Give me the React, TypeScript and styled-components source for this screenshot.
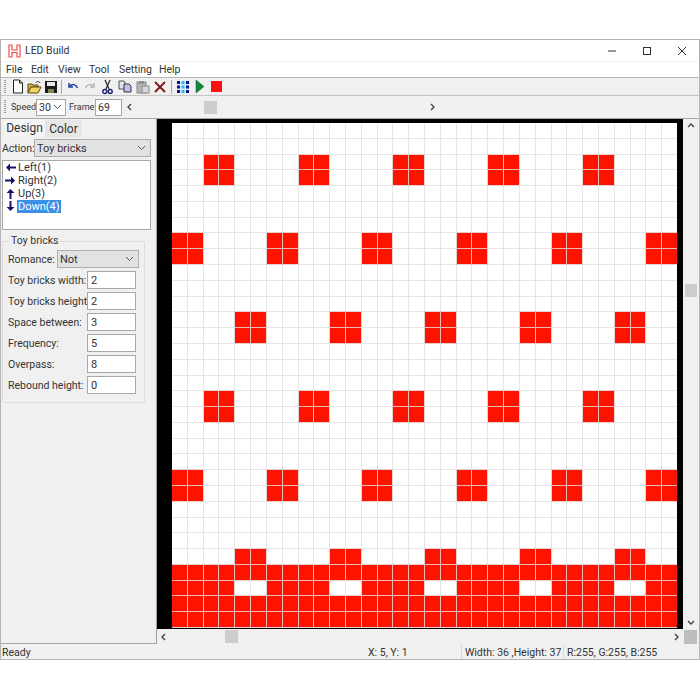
import React from "react";
import styled, { createGlobalStyle } from "styled-components";

const GlobalStyle = createGlobalStyle`
  html, body {
    margin: 0;
    padding: 0;
    background: #ffffff;
  }
  * {
    box-sizing: border-box;
  }
`;

const Window = styled.div`
  margin-top: 39px;
  width: 700px;
  height: 621px;
  display: flex;
  flex-direction: column;
  border: 1px solid #b4b4b4;
  background: #f0f0f0;
  color: #333333;
  font-family: Roboto, "Noto Sans", sans-serif;
  font-size: 10.5px;
  overflow: hidden;
`;

const TitleBar = styled.div`
  height: 21px;
  margin-bottom: 1px;
  display: flex;
  align-items: center;
  background: #ffffff;
  padding-left: 7px;
  flex: none;
`;

const AppTitle = styled.span`
  margin-left: 4px;
  flex: 1;
`;

const WindowButton = styled.div`
  width: 35px;
  display: flex;
  justify-content: center;
  align-items: center;
`;

const MenuBar = styled.div`
  height: 16px;
  display: flex;
  align-items: center;
  background: #ffffff;
  padding: 1px 0 0 5px;
  border-bottom: 1px solid #b8b8b8;
  flex: none;
`;

const MenuItem = styled.span<{ $w: number }>`
  width: ${(p) => p.$w}px;
  line-height: 14px;
  flex: none;
`;

const IconBar = styled.div`
  height: 18px;
  display: flex;
  align-items: center;
  padding-left: 3px;
  border-bottom: 1px solid #c4c4c4;
  flex: none;
`;

const Gripper = styled.div<{ $gap: number }>`
  width: 2px;
  height: 14px;
  margin-right: ${(p) => p.$gap}px;
  background-image: linear-gradient(#a0a0a0 50%, transparent 50%);
  background-size: 2px 2px;
  flex: none;
`;

const ToolIcon = styled.div<{ $w: number }>`
  width: ${(p) => p.$w}px;
  height: 16px;
  display: flex;
  align-items: center;
  justify-content: center;
  flex: none;
`;

const Separator = styled.div`
  width: 1px;
  height: 14px;
  margin: 0 2px;
  background: #a8a8a8;
  flex: none;
`;

const SpeedBar = styled.div`
  height: 23px;
  display: flex;
  align-items: center;
  padding-left: 3px;
  border-bottom: 1px solid #a8a8a8;
  flex: none;
`;

const SmallLabel = styled.span<{ $w: number }>`
  width: ${(p) => p.$w}px;
  font-size: 9px;
  white-space: nowrap;
  flex: none;
`;

const SpeedSelect = styled.div`
  width: 30px;
  height: 17px;
  margin-right: 3px;
  display: flex;
  align-items: center;
  justify-content: space-between;
  padding: 0 3px 0 2px;
  background: #ffffff;
  border: 1px solid #a6a6a6;
  flex: none;
`;

const FrameInput = styled.div`
  width: 27px;
  height: 17px;
  margin-right: 1px;
  padding-left: 2px;
  display: flex;
  align-items: center;
  background: #ffffff;
  border: 1px solid #a6a6a6;
  flex: none;
`;

const HTrack = styled.div<{ $w?: number }>`
  display: flex;
  align-items: center;
  height: 15px;
  flex: ${(p) => (p.$w ? "none" : "1")};
  width: ${(p) => (p.$w ? `${p.$w}px` : "auto")};
`;

const ArrowCell = styled.div`
  width: 13px;
  height: 13px;
  display: flex;
  align-items: center;
  justify-content: center;
  flex: none;
`;

const HThumb = styled.div<{ $left: number }>`
  width: 13px;
  height: 13px;
  margin-left: ${(p) => p.$left}px;
  margin-right: auto;
  background: #cdcdcd;
  flex: none;
`;

const Main = styled.div`
  flex: 1;
  min-height: 0;
  display: flex;
`;

const LeftPanel = styled.div`
  width: 156px;
  display: flex;
  flex-direction: column;
  border-right: 1px solid #a0a0a0;
  border-bottom: 1px solid #a8a8a8;
  padding: 0 4px 0 1px;
  flex: none;
`;

const Tabs = styled.div`
  height: 18px;
  display: flex;
  padding-left: 2px;
  flex: none;
`;

const Tab = styled.div<{ $active?: boolean }>`
  display: flex;
  align-items: center;
  justify-content: center;
  width: ${(p) => (p.$active ? 41 : 37)}px;
  height: ${(p) => (p.$active ? 18 : 17)}px;
  margin-top: ${(p) => (p.$active ? 0 : 1)}px;
  background: ${(p) => (p.$active ? "#f4f4f4" : "#e6e6e6")};
  font-size: 12px;
`;

const ActionRow = styled.div`
  display: flex;
  align-items: center;
  height: 18px;
  margin-top: 2px;
`;

const DropDown = styled.div<{ $w: number }>`
  width: ${(p) => p.$w}px;
  height: 18px;
  display: flex;
  align-items: center;
  justify-content: space-between;
  padding: 0 4px 0 2px;
  background: #e2e2e2;
  border: 1px solid #adadad;
  font-size: 11px;
  flex: none;
`;

const ActionLabel = styled.span`
  width: 32px;
  flex: none;
`;

const ActionList = styled.div`
  width: 149px;
  height: 70px;
  margin-top: 3px;
  padding-left: 1px;
  background: #ffffff;
  border: 1px solid #a8a8a8;
`;

const ListRow = styled.div`
  display: flex;
  align-items: center;
  height: 13px;
  font-size: 11px;
`;

const ListArrow = styled.div`
  width: 13px;
  display: flex;
  justify-content: center;
  flex: none;
`;

const ListText = styled.span<{ $selected?: boolean }>`
  padding: 0 1px;
  line-height: 13px;
  background: ${(p) => (p.$selected ? "#3a8fe6" : "transparent")};
  color: ${(p) => (p.$selected ? "#ffffff" : "#333333")};
`;

const Group = styled.fieldset`
  width: 143px;
  margin: 5px 0 0;
  padding: 0 4px 6px 5px;
  height: 168px;
  border: 1px solid #dcdcdc;
  border-radius: 2px;
`;

const GroupTitle = styled.legend`
  padding: 0 1px;
  margin-left: 2px;
  line-height: 12px;
`;

const FieldRow = styled.div`
  display: flex;
  align-items: center;
  height: 18px;
  margin-top: 3px;
`;

const FieldLabel = styled.span<{ $w: number }>`
  width: ${(p) => p.$w}px;
  white-space: nowrap;
  flex: none;
`;

const FieldInput = styled.div`
  width: 49px;
  height: 18px;
  padding-left: 3px;
  display: flex;
  align-items: center;
  background: #ffffff;
  border: 1px solid #a8a8a8;
  font-size: 11px;
  flex: none;
`;

const CanvasArea = styled.div`
  flex: 1;
  min-width: 0;
  display: flex;
  flex-direction: column;
`;

const CanvasRow = styled.div`
  flex: 1;
  min-height: 0;
  display: flex;
`;

const Viewport = styled.div`
  flex: 1;
  padding: 4px 6px 1px 15px;
  background: #000000;
`;

const LedGrid = styled.div`
  width: 505px;
  height: 505px;
  display: grid;
  grid-template-columns: repeat(32, 1fr);
  grid-template-rows: repeat(32, 1fr);
  gap: 1px;
  background: #e6e6e6;
  padding: 0 0 1px;
`;

const Led = styled.div<{ $on: boolean }>`
  background: ${(p) => (p.$on ? "#fe1300" : "#ffffff")};
  box-shadow: ${(p) => (p.$on ? "0 0 0 1px rgba(240, 60, 40, 0.12)" : "none")};
`;

const VScroll = styled.div`
  width: 16px;
  display: flex;
  flex-direction: column;
  align-items: center;
  flex: none;
`;

const VThumb = styled.div`
  width: 12px;
  height: 13px;
  margin-top: 152px;
  margin-bottom: auto;
  background: #cdcdcd;
`;

const BottomScroll = styled.div`
  height: 15px;
  display: flex;
  align-items: center;
  flex: none;
`;

const Corner = styled.div`
  width: 13px;
  height: 14px;
  margin: 0 2px 0 1px;
  background: #bdbdbd;
  flex: none;
`;

const StatusBar = styled.div`
  height: 15px;
  display: flex;
  align-items: center;
  flex: none;
`;

const StatusCell = styled.div<{ $w: number; $divider?: boolean; $pad?: number }>`
  width: ${(p) => p.$w}px;
  padding-left: ${(p) => p.$pad ?? 4}px;
  height: 15px;
  line-height: 18px;
  white-space: nowrap;
  flex: none;
  border-left: ${(p) => (p.$divider ? "1px solid #dadada" : "none")};
`;

const Chevron = ({ dir }: { dir: "up" | "down" | "left" | "right" }) => {
  const points = {
    up: "1,5 4,2 7,5",
    down: "1,2 4,5 7,2",
    left: "5,1 2,4 5,7",
    right: "2,1 5,4 2,7",
  }[dir];
  return (
    <svg width="8" height="8" viewBox="0 0 8 8">
      <polyline points={points} fill="none" stroke="#444" strokeWidth="1.4" />
    </svg>
  );
};

const SelectCaret = () => (
  <svg width="9" height="6" viewBox="0 0 9 6">
    <polyline points="1,1 4.5,4.5 8,1" fill="none" stroke="#555" strokeWidth="1" />
  </svg>
);

const LogoIcon = () => (
  <svg width="13" height="14" viewBox="0 0 13 14">
    <path d="M1 1h3v5h5V1h3v12H9V8.500H4V13H1z" fill="#fff" stroke="#ee4a45" strokeWidth="1.2" />
  </svg>
);

const NewIcon = () => (
  <svg width="14" height="15" viewBox="0 0 14 15">
    <path d="M2.500 1h6l3 3v10h-9z" fill="#fff" stroke="#222" />
    <path d="M8.500 1v3h3" fill="none" stroke="#222" />
  </svg>
);

const OpenIcon = () => (
  <svg width="15" height="14" viewBox="0 0 15 14">
    <path d="M1 4h4l1 1h5v2H4l-3 6z" fill="#d8b840" stroke="#5a4a10" />
    <path d="M1 13l3-6h10l-3 6z" fill="#f0d468" stroke="#5a4a10" />
    <path d="M9 3c1-2 3-2 4 0" fill="none" stroke="#222" />
  </svg>
);

const SaveIcon = () => (
  <svg width="14" height="14" viewBox="0 0 14 14">
    <rect x="1" y="1" width="12" height="12" fill="#1c1c1c" />
    <rect x="3" y="2" width="8" height="4" fill="#e8e8e8" />
    <rect x="4" y="9" width="6" height="4" fill="#7a8a50" />
  </svg>
);

const UndoIcon = ({ color }: { color: string }) => (
  <svg width="13" height="11" viewBox="0 0 13 11">
    <path d="M3 2v4h4" fill="none" stroke={color} strokeWidth="1.500" />
    <path d="M3.500 5.500C6 2.500 10 3 11.500 7" fill="none" stroke={color} strokeWidth="1.500" />
  </svg>
);

const RedoIcon = ({ color }: { color: string }) => (
  <svg width="13" height="11" viewBox="0 0 13 11">
    <path d="M10 2v4H6" fill="none" stroke={color} strokeWidth="1.500" />
    <path d="M9.500 5.500C7 2.500 3 3 1.500 7" fill="none" stroke={color} strokeWidth="1.500" />
  </svg>
);

const CutIcon = () => (
  <svg width="11" height="16" viewBox="0 0 11 16">
    <path d="M3 1l4 9M8 1L4 10" stroke="#222" strokeWidth="1.200" fill="none" />
    <circle cx="2.800" cy="12.500" r="2" fill="none" stroke="#16206e" strokeWidth="1.400" />
    <circle cx="8.200" cy="12.500" r="2" fill="none" stroke="#16206e" strokeWidth="1.400" />
  </svg>
);

const CopyIcon = () => (
  <svg width="14" height="13" viewBox="0 0 14 13">
    <path d="M1 1h5l1 1v7H1z" fill="#dfe3ee" stroke="#555" />
    <path d="M6 4h5l2 2v6H6z" fill="#b9c2e0" stroke="#334" />
  </svg>
);

const PasteIcon = () => (
  <svg width="14" height="14" viewBox="0 0 14 14">
    <rect x="1" y="2" width="9" height="11" fill="#b5b5b5" stroke="#8a8a8a" />
    <rect x="3" y="1" width="5" height="3" fill="#8f8f8f" />
    <rect x="6" y="6" width="7" height="7" fill="#d8d8d8" stroke="#8a8a8a" />
  </svg>
);

const DeleteIcon = () => (
  <svg width="12" height="12" viewBox="0 0 12 12">
    <path d="M1 1l10 10M11 1L1 11" stroke="#7a1616" strokeWidth="1.800" />
  </svg>
);

const GridIcon = () => (
  <svg width="12" height="12" viewBox="0 0 12 12">
    <rect width="12" height="12" fill="#d8f0ff" />
    <path d="M1.500 0v12M10.500 0v12" stroke="#10108a" strokeWidth="3" strokeDasharray="3 1.500" />
    <path d="M6 0v12" stroke="#30b8e8" strokeWidth="3" strokeDasharray="3 1.500" />
  </svg>
);

const PlayIcon = () => (
  <svg width="9" height="13" viewBox="0 0 9 13">
    <path d="M1 0l8 6.500L1 13z" fill="#0f8a3c" stroke="#0c5a2a" strokeWidth="0.500" />
  </svg>
);

const StopIcon = () => (
  <svg width="11" height="11" viewBox="0 0 11 11">
    <rect width="11" height="11" fill="#fb0f0f" />
  </svg>
);

const ActionArrow = ({ dir }: { dir: "left" | "right" | "up" | "down" }) => {
  const rotate = { left: 0, right: 180, up: 90, down: 270 }[dir];
  return (
    <svg width="11" height="11" viewBox="0 0 11 11" style={{ transform: `rotate(${rotate}deg)` }}>
      <path d="M5 1.500L1 5.500l4 4V6.500h6v-2H5z" fill="#14146e" />
    </svg>
  );
};

// which leds are lit, the pattern repeats every 6 columns
const brickRows: Record<number, number> = {
  2: 2, 3: 2, 7: 0, 8: 0, 12: 4, 13: 4, 17: 2, 18: 2, 22: 0, 23: 0, 27: 4,
};

const isOn = (row: number, col: number) => {
  const inBrick = (offset: number) => {
    const c = (col - offset + 6) % 6;
    return c === 0 || c === 1;
  };
  if (row === 29) return !inBrick(4);
  if (row >= 28) return true;
  const offset = brickRows[row];
  return offset !== undefined && inBrick(offset);
};

const leds = Array.from({ length: 32 * 32 }, (_, i) => isOn(Math.floor(i / 32), i % 32));

const menus: [string, number][] = [
  ["File", 25],
  ["Edit", 27],
  ["View", 31],
  ["Tool", 30],
  ["Setting", 40],
  ["Help", 30],
];

const fields = [
  ["Toy bricks width:", "2"],
  ["Toy bricks height:", "2"],
  ["Space between:", "3"],
  ["Frequency:", "5"],
  ["Overpass:", "8"],
  ["Rebound height:", "0"],
];

const App: React.FC = () => {
  return (
    <>
      <GlobalStyle />
      <Window>
        <TitleBar>
          <LogoIcon />
          <AppTitle>LED Build</AppTitle>
          <WindowButton>
            <svg width="10" height="10" viewBox="0 0 10 10">
              <path d="M1 5h8" stroke="#333" />
            </svg>
          </WindowButton>
          <WindowButton>
            <svg width="10" height="10" viewBox="0 0 10 10">
              <rect x="1.500" y="1.500" width="7" height="7" fill="none" stroke="#333" />
            </svg>
          </WindowButton>
          <WindowButton>
            <svg width="10" height="10" viewBox="0 0 10 10">
              <path d="M1 1l8 8M9 1l-8 8" stroke="#333" />
            </svg>
          </WindowButton>
        </TitleBar>
        <MenuBar>
          {menus.map(([m, w]) => (
            <MenuItem key={m} $w={w}>{m}</MenuItem>
          ))}
        </MenuBar>
        <IconBar>
          <Gripper $gap={3.5} />
          <ToolIcon $w={16.5}><NewIcon /></ToolIcon>
          <ToolIcon $w={16.5}><OpenIcon /></ToolIcon>
          <ToolIcon $w={16.5}><SaveIcon /></ToolIcon>
          <Separator />
          <ToolIcon $w={17.5}><UndoIcon color="#1c3f9c" /></ToolIcon>
          <ToolIcon $w={17.5}><RedoIcon color="#b5b5b5" /></ToolIcon>
          <ToolIcon $w={17.5}><CutIcon /></ToolIcon>
          <ToolIcon $w={17.5}><CopyIcon /></ToolIcon>
          <ToolIcon $w={17.5}><PasteIcon /></ToolIcon>
          <ToolIcon $w={17.5}><DeleteIcon /></ToolIcon>
          <Separator />
          <ToolIcon $w={17}><GridIcon /></ToolIcon>
          <ToolIcon $w={17}><PlayIcon /></ToolIcon>
          <ToolIcon $w={17}><StopIcon /></ToolIcon>
        </IconBar>
        <SpeedBar>
          <Gripper $gap={5} />
          <SmallLabel $w={25}>Speed:</SmallLabel>
          <SpeedSelect>
            30
            <SelectCaret />
          </SpeedSelect>
          <SmallLabel $w={26}>Frame:</SmallLabel>
          <FrameInput>69</FrameInput>
          <HTrack $w={316}>
            <ArrowCell><Chevron dir="left" /></ArrowCell>
            <HThumb $left={68} />
            <ArrowCell><Chevron dir="right" /></ArrowCell>
          </HTrack>
        </SpeedBar>
        <Main>
          <LeftPanel>
            <Tabs>
              <Tab $active>Design</Tab>
              <Tab>Color</Tab>
            </Tabs>
            <ActionRow>
              <ActionLabel>Action:</ActionLabel>
              <DropDown $w={117}>
                Toy bricks
                <SelectCaret />
              </DropDown>
            </ActionRow>
            <ActionList>
              <ListRow><ListArrow><ActionArrow dir="left" /></ListArrow><ListText>Left(1)</ListText></ListRow>
              <ListRow><ListArrow><ActionArrow dir="right" /></ListArrow><ListText>Right(2)</ListText></ListRow>
              <ListRow><ListArrow><ActionArrow dir="up" /></ListArrow><ListText>Up(3)</ListText></ListRow>
              <ListRow><ListArrow><ActionArrow dir="down" /></ListArrow><ListText $selected>Down(4)</ListText></ListRow>
            </ActionList>
            <Group>
              <GroupTitle>Toy bricks</GroupTitle>
              <FieldRow>
                <FieldLabel $w={49}>Romance:</FieldLabel>
                <DropDown $w={82}>
                  Not
                  <SelectCaret />
                </DropDown>
              </FieldRow>
              {fields.map(([label, value]) => (
                <FieldRow key={label}>
                  <FieldLabel $w={79}>{label}</FieldLabel>
                  <FieldInput>{value}</FieldInput>
                </FieldRow>
              ))}
            </Group>
          </LeftPanel>
          <CanvasArea>
            <CanvasRow>
              <Viewport>
                <LedGrid>
                  {leds.map((on, i) => (
                    <Led key={i} $on={on} />
                  ))}
                </LedGrid>
              </Viewport>
              <VScroll>
                <ArrowCell><Chevron dir="up" /></ArrowCell>
                <VThumb />
                <ArrowCell><Chevron dir="down" /></ArrowCell>
              </VScroll>
            </CanvasRow>
            <BottomScroll>
              <HTrack>
                <ArrowCell><Chevron dir="left" /></ArrowCell>
                <HThumb $left={55} />
                <ArrowCell><Chevron dir="right" /></ArrowCell>
              </HTrack>
              <Corner />
            </BottomScroll>
          </CanvasArea>
        </Main>
        <StatusBar>
          <StatusCell $w={367} $pad={1}>Ready</StatusCell>
          <StatusCell $w={93} $pad={0}>X: 5, Y: 1</StatusCell>
          <StatusCell $w={102} $divider $pad={3}>Width: 36 ,Height: 37</StatusCell>
          <StatusCell $w={130} $divider $pad={3}>R:255, G:255, B:255</StatusCell>
        </StatusBar>
      </Window>
    </>
  );
};

export default App;
